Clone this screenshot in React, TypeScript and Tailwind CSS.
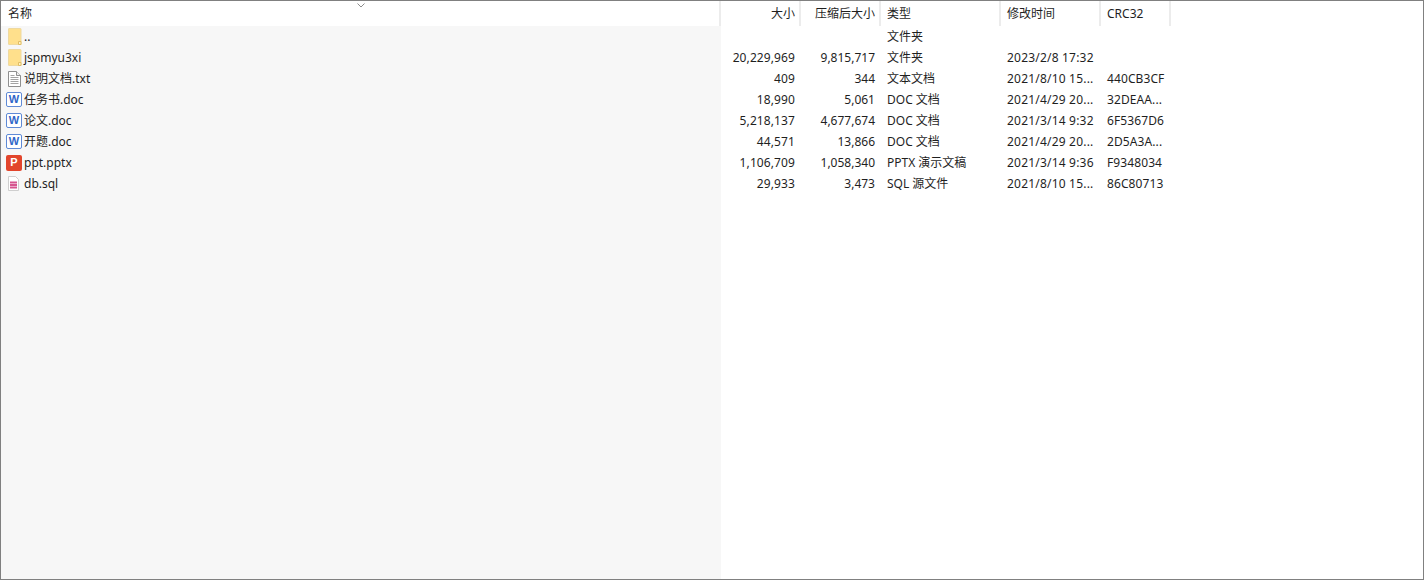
const FONT = "font-['Noto_Sans','Noto_Sans_CJK_SC',sans-serif]";

type FileRow = {
  name: string;
  icon: "folder" | "txt" | "word" | "ppt" | "sql";
  size: string;
  packed: string;
  kind: string;
  modified: string;
  crc: string;
};

const rows: FileRow[] = [
  { name: "..", icon: "folder", size: "", packed: "", kind: "文件夹", modified: "", crc: "" },
  { name: "jspmyu3xi", icon: "folder", size: "20,229,969", packed: "9,815,717", kind: "文件夹", modified: "2023/2/8 17:32", crc: "" },
  { name: "说明文档.txt", icon: "txt", size: "409", packed: "344", kind: "文本文档", modified: "2021/8/10 15...", crc: "440CB3CF" },
  { name: "任务书.doc", icon: "word", size: "18,990", packed: "5,061", kind: "DOC 文档", modified: "2021/4/29 20...", crc: "32DEAA..." },
  { name: "论文.doc", icon: "word", size: "5,218,137", packed: "4,677,674", kind: "DOC 文档", modified: "2021/3/14 9:32", crc: "6F5367D6" },
  { name: "开题.doc", icon: "word", size: "44,571", packed: "13,866", kind: "DOC 文档", modified: "2021/4/29 20...", crc: "2D5A3A..." },
  { name: "ppt.pptx", icon: "ppt", size: "1,106,709", packed: "1,058,340", kind: "PPTX 演示文稿", modified: "2021/3/14 9:36", crc: "F9348034" },
  { name: "db.sql", icon: "sql", size: "29,933", packed: "3,473", kind: "SQL 源文件", modified: "2021/8/10 15...", crc: "86C80713" },
];

function FileIcon({ icon }: { icon: FileRow["icon"] }) {
  if (icon === "folder") {
    return (
      <svg width="16" height="18" viewBox="0 0 16 18" className="shrink-0">
        <path d="M3 .5h11.500a.5.5 0 0 1 .5.500v15.500H3a.5.5 0 0 1-.5-.5V1a.5.5 0 0 1 .5-.5z" fill="#ffe08c" stroke="#eed9a0" />
        <path d="M12.500 16.500v-3h2.500v3z" fill="#fff3c8" stroke="#e0bd66" />
      </svg>
    );
  }
  if (icon === "txt") {
    return (
      <svg width="16" height="18" viewBox="0 0 16 18" className="shrink-0">
        <path d="M2.500 1.500h8l4 4v11h-12z" fill="#fff" stroke="#8f8f8f" />
        <path d="M10.500 1.500v4h4" fill="#eee" stroke="#8f8f8f" />
        <path d="M4.500 5.500h4M4.500 7.500h8M4.500 9.500h8M4.500 11.500h8M4.500 13.500h8" stroke="#a3a3a3" />
      </svg>
    );
  }
  if (icon === "word") {
    return (
      <div className="flex h-[15px] w-4 shrink-0 items-center justify-center rounded-[2px] border border-[#5f8ad6] bg-white text-[11px] leading-none font-bold text-[#2f66c8] font-['Liberation_Sans',sans-serif]">
        W
      </div>
    );
  }
  if (icon === "ppt") {
    return (
      <div className="flex h-4 w-4 shrink-0 items-center justify-center rounded-[2px] bg-[#e2452c] text-[11px] leading-none font-bold text-white font-['Liberation_Sans',sans-serif]">
        P
      </div>
    );
  }
  return (
    <svg width="16" height="16" viewBox="0 0 16 16" className="shrink-0">
      <path d="M2.500 .5h7l3 3v11h-10z" fill="#fff" stroke="#cfcfcf" />
      <path d="M4 5.500h7v2H4zM4 8h7v2H4zM4 10.500h7v2H4z" fill="#d6558f" />
    </svg>
  );
}

function Column({
  label,
  width,
  right,
  values,
  valueClass = "",
}: {
  label: string;
  width: string;
  right?: boolean;
  values: string[];
  valueClass?: string;
}) {
  return (
    <div className={`flex flex-col shrink-0 ${width}`}>
      <div className={`flex h-[25px] items-center border-r-2 border-[#ececec] px-[6px] pt-px ${right ? "justify-end pr-[4px]" : ""}`}>
        {label}
      </div>
      {values.map((value, i) => (
        <div
          key={i}
          className={`flex h-[21px] items-center whitespace-nowrap px-[6px] ${right ? "justify-end" : ""} ${valueClass}`}
        >
          {value}
        </div>
      ))}
    </div>
  );
}

export default function App() {
  return (
    <div className={`flex h-[580px] w-[1424px] border border-[#808080] bg-white text-[12px] text-[#1f1f1f] ${FONT}`}>
      <div className="relative flex w-[720px] shrink-0 flex-col">
        <div className="flex h-[25px] items-center border-r-2 border-[#ececec] pl-[7px] pt-px">名称</div>
        <svg width="8" height="5" viewBox="0 0 8 5" className="absolute left-[356px] top-[2px]">
          <path d="M.5.500 4 4 7.500.500" fill="none" stroke="#8c8c8c" />
        </svg>
        <div className="flex-1 bg-[#f7f7f7]">
          {rows.map((row) => (
            <div key={row.name} className="flex h-[21px] items-center pl-[5px]">
              <div className="flex w-[18px] justify-start">
                <FileIcon icon={row.icon} />
              </div>
              <span className="whitespace-nowrap">{row.name}</span>
            </div>
          ))}
        </div>
      </div>
      <Column label="大小" width="w-[80px]" right values={rows.map((r) => r.size)} valueClass="tracking-[0.1px]" />
      <Column label="压缩后大小" width="w-[80px]" right values={rows.map((r) => r.packed)} />
      <Column label="类型" width="w-[120px]" values={rows.map((r) => r.kind)} />
      <Column label="修改时间" width="w-[100px]" values={rows.map((r) => r.modified)} valueClass="tracking-[0.2px]" />
      <Column label="CRC32" width="w-[70px]" values={rows.map((r) => r.crc)} valueClass="tracking-[0.1px]" />
    </div>
  );
}
